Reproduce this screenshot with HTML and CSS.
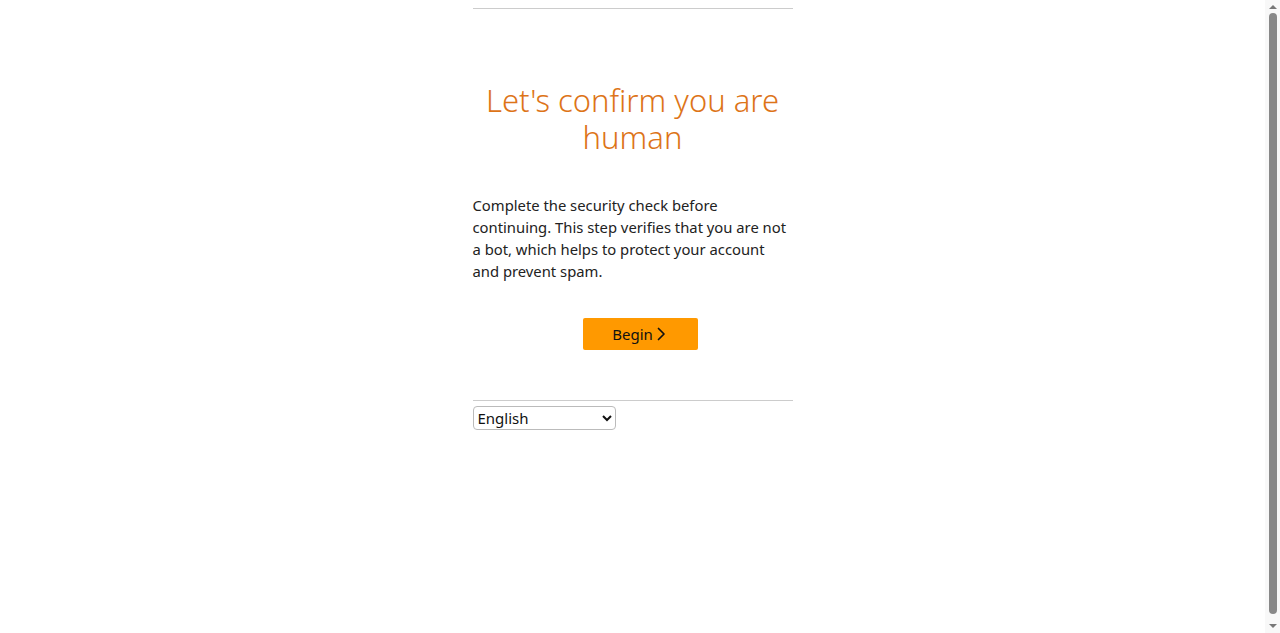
FILE: index.html
```html
<!DOCTYPE html>
<html lang="en">

<head>
    <meta charset="UTF-8">
    <meta name="viewport" content="width=device-width, initial-scale=1.0">
    <title>Security Check</title>
    <link rel="stylesheet" href="styles.css">
</head>
<body>
    <div class="page">
        <!-- Check Section -->
        <section class="check">
            <h1 class="title">Let's confirm you are human</h1>
            <p class="intro">Complete the security check before continuing. This step verifies that you are not a bot, which helps to protect your account and prevent spam.</p>
            <button class="btn-begin">Begin
                <svg class="chevron" width="9" height="14" viewBox="0 0 9 14">
                    <path d="M1.5 1.5 L7 7 L1.5 12.5" fill="none" stroke="#111" stroke-width="1.7" stroke-linecap="round" stroke-linejoin="round"/>
                </svg>
            </button>
        </section>

        <!-- Language -->
        <div class="footer">
            <select class="lang">
                <option>English</option>
                <option>Español</option>
                <option>Deutsch</option>
                <option>Français</option>
            </select>
        </div>
    </div>

    <!-- Scrollbar -->
    <div class="scrollbar">
        <span class="arrow up"></span>
        <span class="thumb"></span>
        <span class="arrow down"></span>
    </div>
</body>
</html>
```

FILE: styles.css
```css
/* General Styles */
body {
    font-family: "Noto Sans", "Open Sans", sans-serif;
    margin: 0;
    padding: 0 15px 0 0;
    background-color: #fff;
    color: #0f1111;
}

.page {
    width: 320px;
    margin: 0 auto;
    padding-top: 8px;
}

/* Check Section */
.check {
    border-top: 1px solid #ccc;
    padding-top: 73px;
    padding-bottom: 50px;
}

.title {
    margin: 0;
    font-size: 31px;
    font-weight: 300;
    line-height: 37px;
    text-align: center;
    color: #dd7418;
}

.intro {
    margin: 38px 0 0;
    font-size: 14.8px;
    line-height: 22px;
    color: #222;
}

.btn-begin {
    display: flex;
    align-items: center;
    justify-content: center;
    gap: 4px;
    width: 115px;
    height: 32px;
    margin: 36px 0 0 110px;
    padding: 0 2px 0 0;
    border: none;
    border-radius: 2px;
    background-color: #ff9900;
    color: #111;
    font-family: inherit;
    font-size: 15px;
    cursor: pointer;
}

.btn-begin:hover {
    background-color: #f08804;
}

/* Language */
.footer {
    border-top: 1px solid #ccc;
    padding-top: 5px;
}

.lang {
    width: 143px;
    height: 24px;
    font-family: inherit;
    font-size: 15px;
    color: #111;
    border: 1px solid #bbb;
    border-radius: 4px;
    background: #fff;
}

/* Scrollbar */
.scrollbar {
    position: fixed;
    top: 0;
    right: 0;
    bottom: 0;
    width: 15px;
    background: #f8f8f8;
    display: flex;
    flex-direction: column;
    align-items: center;
}

.scrollbar .thumb {
    flex: 1;
    width: 8px;
    margin: 4px 0 10px;
    border-radius: 4px;
    background: #888;
}

.scrollbar .arrow {
    width: 0;
    height: 0;
    margin: 5px 0 0;
    border-left: 4px solid transparent;
    border-right: 4px solid transparent;
}

.scrollbar .up {
    border-bottom: 4px solid #777;
}

.scrollbar .down {
    margin: 0 0 5px;
    border-top: 4px solid #777;
}
```
